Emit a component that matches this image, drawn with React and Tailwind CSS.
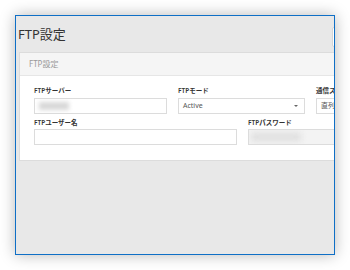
export default function App() {
  const font = { fontFamily: '"Noto Sans", "Noto Sans CJK JP", sans-serif' };
  return (
    <div className="w-[350px] h-[270px] bg-white p-[15px]" style={font}>
      <div className="w-[320px] h-[240px] border border-[#0f6fc6] bg-[#e8e8e8] overflow-hidden shadow-[0_0_14px_rgba(0,0,0,0.28)]">
        <div className="h-[36px] flex items-center justify-between pl-[2px]">
          <span className="text-[13px] leading-none text-[#333]">FTP設定</span>
          <div className="w-[10px] h-[20px] mt-[6px] bg-white border border-[#d6d6d6] mr-[-8px] rounded-[2px]" />
        </div>
        <div className="ml-[3px] w-[340px] bg-white border border-[#dcdcdc]">
          <div className="h-[23px] bg-[#f5f5f5] border-b border-[#e6e6e6] pl-[9px] flex items-center">
            <span className="text-[8px] text-[#999]">FTP設定</span>
          </div>
          <div className="pl-[14px] pt-[10px] pb-[15px]">
            <div className="flex gap-[11px]">
              <div className="w-[133px] shrink-0">
                <div className="text-[6.5px] font-semibold leading-[10px] h-[10px] mb-[2px] text-[#333]">FTPサーバー</div>
                <div className="h-[16px] border border-[#dcdcdc] relative">
                  <div className="absolute left-[4px] top-[3px] w-[30px] h-[8px] bg-[#d8d8d8] blur-[2px]" />
                </div>
              </div>
              <div className="w-[127px] shrink-0">
                <div className="text-[6.5px] font-semibold leading-[10px] h-[10px] mb-[2px] text-[#333]">FTPモード</div>
                <div className="h-[16px] border border-[#dcdcdc] flex items-center justify-between pl-[4px] pr-[6px]">
                  <span className="text-[7px] text-[#555]">Active</span>
                  <span className="w-0 h-0 border-l-[2px] border-r-[2px] border-t-[2px] border-l-transparent border-r-transparent border-t-[#666]" />
                </div>
              </div>
              <div className="w-[80px] shrink-0">
                <div className="text-[6.5px] font-semibold leading-[10px] h-[10px] mb-[2px] text-[#333] whitespace-nowrap">通信スピード</div>
                <div className="h-[16px] border border-[#dcdcdc] flex items-center pl-[4px]">
                  <span className="text-[7px] text-[#555]">直列</span>
                </div>
              </div>
            </div>
            <div className="flex gap-[11px] mt-[4px]">
              <div className="w-[203px] shrink-0">
                <div className="text-[6.5px] font-semibold leading-[10px] h-[10px] mb-[1px] text-[#333]">FTPユーザー名</div>
                <div className="h-[16px] border border-[#dcdcdc]" />
              </div>
              <div className="w-[120px] shrink-0">
                <div className="text-[6.5px] font-semibold leading-[10px] h-[10px] mb-[1px] text-[#333]">FTPパスワード</div>
                <div className="h-[16px] border border-[#dcdcdc] bg-[#f3f3f3] relative overflow-hidden">
                  <div className="absolute left-[2px] top-[3px] w-[50px] h-[8px] bg-[#dedede] blur-[3px]" />
                </div>
              </div>
            </div>
          </div>
        </div>
      </div>
    </div>
  );
}
